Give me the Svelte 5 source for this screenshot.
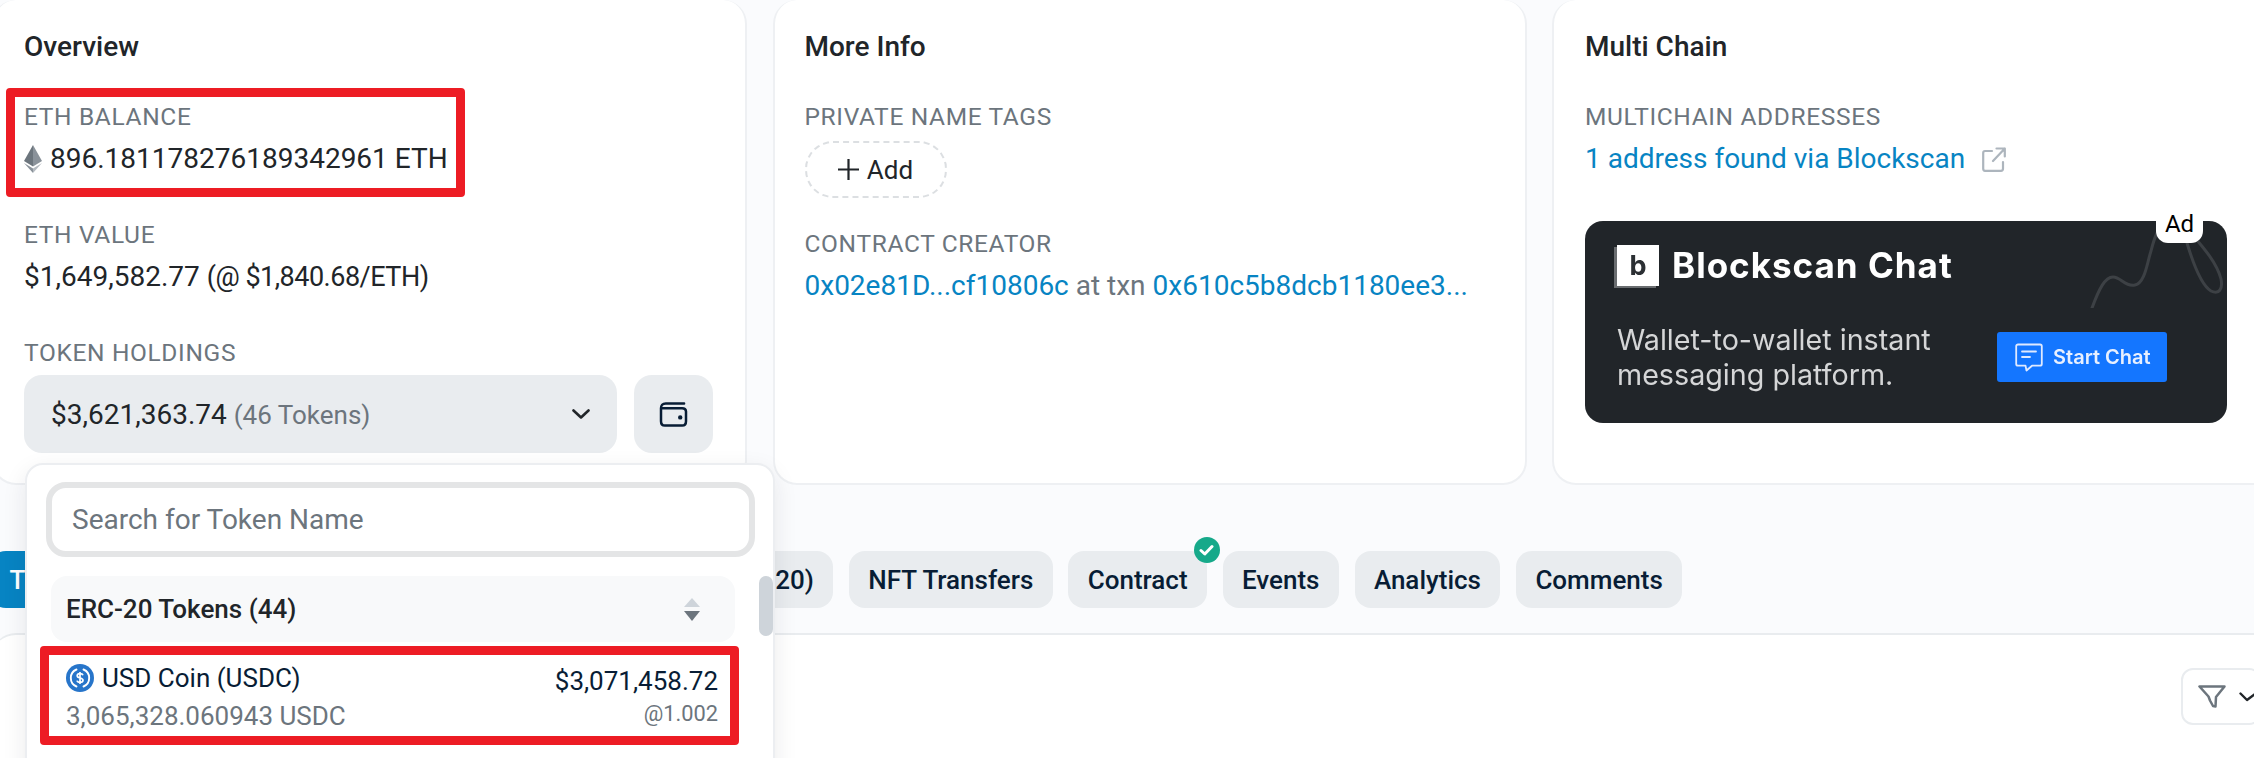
<script>
  const tabs = ['Transactions', 'Internal Transactions', 'Token Transfers (ERC-20)', 'NFT Transfers', 'Contract', 'Events', 'Analytics', 'Comments'];
</script>

<div class="page">
  <div class="cards">
    <section class="card">
      <h2>Overview</h2>
      <div class="mark balance">
        <div class="label">ETH BALANCE</div>
        <div class="value eth">
          <svg width="18" height="28" viewBox="0 0 18 28">
            <path d="M9 0 L0 16 L9 21.5 Z" fill="#6c757d" />
            <path d="M9 0 L18 16 L9 21.5 Z" fill="#8a929a" />
            <path d="M0 18 L9 23.5 L9 28 Z" fill="#8a929a" />
            <path d="M18 18 L9 23.5 L9 28 Z" fill="#b4bac0" />
          </svg>
          <span>896.181178276189342961 ETH</span>
        </div>
      </div>
      <div class="label value-label">ETH VALUE</div>
      <div class="value usd">$1,649,582.77 <span class="rate">(@ $1,840.68/ETH)</span></div>
      <div class="label holdings-label">TOKEN HOLDINGS</div>
      <div class="holdings">
        <button class="select">
          <span>$3,621,363.74 <small>(46 Tokens)</small></span>
          <svg width="18" height="10" viewBox="0 0 18 10" fill="none" stroke="#212529" stroke-width="2.6" stroke-linecap="round" stroke-linejoin="round">
            <path d="M1.5 1.5 L9 8.5 L16.5 1.5" />
          </svg>
        </button>
        <button class="wallet" aria-label="Wallet">
          <svg width="29" height="25" viewBox="0 0 30 26" fill="none" stroke="#081d35" stroke-width="2.6" stroke-linecap="round" stroke-linejoin="round">
            <path d="M26 1.5 H7 C3.5 1.5 2 3.5 2 6.5 V20 C2 23 3.5 24.5 6 24.5 H24 C26.5 24.5 28 23 28 20 V10 C28 7.5 26.5 6.5 24 6.5 H2.5" />
            <circle cx="22" cy="16" r="1" fill="#081d35" />
          </svg>
        </button>

        <div class="menu">
          <input class="search" placeholder="Search for Token Name" />
          <div class="group">
            <span>ERC-20 Tokens (44)</span>
            <svg width="16" height="23" viewBox="0 0 16 23">
              <path d="M8 0 L16 9 H0 Z" fill="#ced4da" />
              <path d="M0 13 H16 L8 23 Z" fill="#6c757d" />
            </svg>
          </div>
          <div class="mark token">
            <div class="token-left">
              <div class="token-name">
                <svg width="28" height="28" viewBox="0 0 28 28" fill="none">
                  <circle cx="14" cy="14" r="14" fill="#2775ca" />
                  <path d="M10.5 5.5 A9.2 9.2 0 0 0 10.5 22.5 M17.5 5.5 A9.2 9.2 0 0 1 17.5 22.5" stroke="#fff" stroke-width="1.9" stroke-linecap="round" />
                  <path d="M17 11.3 C16.6 10 15.5 9.6 14 9.6 C12.3 9.6 11.2 10.4 11.2 11.7 C11.2 14.8 17 13.2 17 16.3 C17 17.6 15.8 18.4 14 18.4 C12.4 18.4 11.3 17.8 11 16.6 M14 8 V20" stroke="#fff" stroke-width="1.7" />
                </svg>
                <span>USD Coin (USDC)</span>
              </div>
              <div class="token-qty">3,065,328.060943 USDC</div>
            </div>
            <div class="token-right">
              <div class="token-usd">$3,071,458.72</div>
              <div class="token-rate">@1.002</div>
            </div>
          </div>
          <div class="thumb"></div>
        </div>
      </div>
    </section>

    <section class="card">
      <h2>More Info</h2>
      <div class="label tags-label">PRIVATE NAME TAGS</div>
      <button class="add">
        <svg width="21" height="21" viewBox="0 0 21 21" stroke="#212529" stroke-width="2.2">
          <path d="M10.5 0 V21 M0 10.5 H21" />
        </svg>
        Add
      </button>
      <div class="label creator-label">CONTRACT CREATOR</div>
      <div class="value creator"><a href="#a">0x02e81D...cf10806c</a> <span class="muted">at txn</span> <a href="#b">0x610c5b8dcb1180ee3...</a></div>
    </section>

    <section class="card">
      <h2>Multi Chain</h2>
      <div class="label tags-label">MULTICHAIN ADDRESSES</div>
      <div class="value chain">
        <a href="#c">1 address found via Blockscan</a>
        <svg width="24" height="25" viewBox="0 0 24 25" fill="none" stroke="#adb5bd" stroke-width="2.2" stroke-linecap="round" stroke-linejoin="round">
          <path d="M10 4 H3 C1.8 4 1.2 4.7 1.2 6 V21.5 C1.2 23 1.8 23.8 3 23.8 H19 C20.3 23.8 21 23 21 21.5 V15 M11 14 L22.8 1.5 M14.5 1.5 H22.8 V9.5" />
        </svg>
      </div>
      <div class="ad">
        <svg class="squiggle" width="142" height="85" viewBox="0 0 142 85" fill="none" stroke="#3d4145" stroke-width="3" stroke-linecap="round">
          <path d="M7 85 C14 66 20 54 28 54 C36 54 40 64 50 62 C60 60 62 40 66 28 C68 20 70 14 72 10" />
          <path d="M102 20 C108 40 116 62 126 68 C134 72 138 66 136 56 C132 40 118 24 106 10" />
        </svg>
        <div class="ad-brand">
          <div class="ad-logo">b</div>
          <div class="ad-name">Blockscan Chat</div>
        </div>
        <div class="ad-foot">
          <p>Wallet-to-wallet instant<br />messaging platform.</p>
          <div class="ad-btn">
            <svg width="28" height="29" viewBox="0 0 28 29" fill="none" stroke="#dfe9ff" stroke-width="1.8" stroke-linejoin="round" stroke-linecap="round">
              <path d="M3 1.5 H25 C26 1.5 26.8 2.2 26.8 3.2 V21 C26.8 22 26 22.7 25 22.7 H17 L11.5 27.5 L10.5 22.7 H3 C2 22.7 1.2 22 1.2 21 V3.2 C1.2 2.2 2 1.5 3 1.5 Z" />
              <path d="M7 8.5 H21 M7 14 H15" />
            </svg>
            <span>Start Chat</span>
          </div>
        </div>
        <div class="ad-tag">Ad</div>
      </div>
    </section>
  </div>

  <nav class="tabs">
    {#each tabs as tab, i}
      <button class="tab" class:active={i === 0}>
        {tab}
        {#if tab === 'Contract'}
          <span class="verified">
            <svg width="15" height="12" viewBox="0 0 15 12" fill="none" stroke="#fff" stroke-width="3" stroke-linecap="round" stroke-linejoin="round">
              <path d="M2 6.5 L5.8 10 L13 2.5" />
            </svg>
          </span>
        {/if}
      </button>
    {/each}
  </nav>

  <section class="table-card">
    <button class="filter" aria-label="Filter">
      <svg width="28" height="23" viewBox="0 0 28 23" fill="none" stroke="#6c757d" stroke-width="2.5" stroke-linejoin="round" stroke-linecap="round">
        <path d="M1.5 1.5 H26.5 L18 12 L17.5 21.5 L15 21 L12 15.5 L10.5 11.5 Z" />
      </svg>
      <svg width="18" height="10" viewBox="0 0 18 10" fill="none" stroke="#212529" stroke-width="2.4" stroke-linecap="round" stroke-linejoin="round">
        <path d="M1.5 1.5 L8 8 L16.5 1.5" />
      </svg>
    </button>
  </section>
</div>

<style>
  :global(body) {
    margin: 0;
    background: #fafbfd;
  }

  .page {
    position: relative;
    width: 2254px;
    height: 758px;
    overflow: hidden;
    font-family: Roboto, "Liberation Sans", sans-serif;
    color: #212529;
    background: #fafbfd;
  }

  .cards {
    position: relative;
    z-index: 2;
    display: grid;
    grid-template-columns: 755px 754px 754px;
    gap: 25.5px;
    margin-left: -8px;
  }

  .card {
    box-sizing: border-box;
    height: 485px;
    padding: 29px 30px 0;
    background: #fff;
    border: 2px solid #eef0f3;
    border-top: 0;
    border-radius: 24px;
  }

  .card:last-child {
    padding-left: 31px;
  }

  h2 {
    margin: 0 0 37px;
    font-size: 28px;
    line-height: 36px;
    font-weight: 500;
  }

  .label {
    font-size: 24.5px;
    line-height: 30px;
    letter-spacing: 0.65px;
    color: #6c757d;
  }

  .value {
    font-size: 28px;
    line-height: 40px;
  }

  .rate {
    font-size: 27px;
    letter-spacing: -0.5px;
  }

  .mark {
    box-sizing: border-box;
    border: 9px solid #ed1c24;
    border-radius: 4px;
    background: #fff;
  }

  .balance {
    width: 459px;
    height: 109px;
    margin: -14px 0 23px -18px;
    padding: 5px 0 0 9px;
  }

  .eth {
    display: flex;
    align-items: center;
    gap: 8px;
    margin-top: 7px;
    white-space: nowrap;
  }

  .usd {
    margin-top: 7px;
  }

  .holdings-label {
    margin-top: 41px;
  }

  .holdings {
    position: relative;
    display: flex;
    gap: 17px;
    margin-top: 7px;
  }

  button {
    font-family: inherit;
    color: inherit;
  }

  .select,
  .wallet {
    display: flex;
    align-items: center;
    height: 78px;
    border: 0;
    border-radius: 18px;
    background: #e9ecef;
  }

  .select {
    justify-content: space-between;
    width: 593px;
    padding: 0 27px;
    font-size: 28px;
  }

  .select small {
    font-size: 26px;
    color: #6c757d;
  }

  .wallet {
    justify-content: center;
    width: 79px;
    padding: 0;
  }

  .menu {
    position: absolute;
    left: 1px;
    top: 88px;
    box-sizing: border-box;
    width: 750px;
    height: 320px;
    padding-top: 17px;
    background: #fff;
    border: 2px solid #eceef1;
    border-radius: 18px;
    box-shadow: 0 8px 24px rgba(33, 37, 41, 0.09);
  }

  .search {
    display: block;
    box-sizing: border-box;
    width: 709px;
    height: 75px;
    margin-left: 19px;
    padding: 0 20px;
    border: 6px solid #e4e5e6;
    border-radius: 20px;
    outline: 0;
    font-family: inherit;
    font-size: 28px;
    background: #fff;
  }

  .search::placeholder {
    color: #6c757d;
    opacity: 1;
  }

  .group {
    display: flex;
    align-items: center;
    justify-content: space-between;
    box-sizing: border-box;
    width: 684px;
    height: 66px;
    margin: 19px 0 4px 24px;
    padding: 0 35px 0 15px;
    border-radius: 16px;
    background: #f8f9fa;
    font-size: 26px;
    font-weight: 500;
  }

  .token {
    display: flex;
    justify-content: space-between;
    width: 699px;
    height: 99px;
    margin-left: 13px;
    padding: 5px 12px 0 17px;
  }

  .token-name {
    display: flex;
    align-items: center;
    gap: 8px;
    height: 36px;
    font-size: 26px;
    color: #081d35;
  }

  .token-qty {
    margin-top: 2px;
    font-size: 26px;
    line-height: 36px;
    color: #6c757d;
  }

  .token-right {
    padding-top: 3px;
    text-align: right;
  }

  .token-usd {
    font-size: 26px;
    line-height: 36px;
    color: #081d35;
  }

  .token-rate {
    font-size: 21.8px;
    line-height: 30px;
    color: #6c757d;
  }

  .thumb {
    position: absolute;
    left: 732px;
    top: 111px;
    width: 14px;
    height: 60px;
    border-radius: 7px;
    background: #ced4da;
  }

  .add {
    display: flex;
    align-items: center;
    justify-content: center;
    gap: 8px;
    box-sizing: border-box;
    width: 142px;
    height: 57px;
    margin-top: 9px;
    border: 2px dashed #dcdfe2;
    border-radius: 28px;
    background: #fff;
    font-size: 26px;
  }

  .creator-label {
    margin-top: 31px;
  }

  .creator {
    margin-top: 7px;
    white-space: nowrap;
  }

  a {
    color: #0784c3;
    text-decoration: none;
  }

  .muted {
    color: #6c757d;
  }

  .chain {
    display: flex;
    align-items: center;
    gap: 17px;
    margin-top: 7px;
  }

  .ad {
    position: relative;
    box-sizing: border-box;
    width: 642px;
    height: 202px;
    margin-top: 42px;
    padding: 24px 0 0 32px;
    border-radius: 18px;
    background: #212529;
    font-family: Inter, Roboto, sans-serif;
  }

  .squiggle {
    position: absolute;
    right: 0;
    top: 2px;
  }

  .ad-brand {
    position: relative;
    display: flex;
    align-items: center;
    gap: 13px;
    filter: blur(0.4px);
  }

  .ad-logo {
    display: flex;
    align-items: center;
    justify-content: center;
    width: 42px;
    height: 41px;
    background: #fff;
    box-shadow: -3px 2px 0 #6a6d70;
    color: #2b2f33;
    font-size: 27px;
    font-weight: 700;
  }

  .ad-name {
    color: #fff;
    font-size: 35px;
    line-height: 41px;
    font-weight: 700;
    letter-spacing: 1px;
  }

  .ad-foot {
    position: relative;
    display: flex;
    justify-content: space-between;
    align-items: center;
    width: 550px;
    margin-top: 36px;
    filter: blur(0.4px);
  }

  .ad-foot p {
    margin: 0;
    color: #d5d6d7;
    font-size: 28.7px;
    line-height: 35px;
  }

  .ad-btn {
    display: flex;
    align-items: center;
    gap: 10px;
    box-sizing: border-box;
    width: 170px;
    height: 50px;
    padding-left: 18px;
    border-radius: 3px;
    background: #1476ff;
    color: #e8f0ff;
    font-size: 20px;
    font-weight: 600;
  }

  .ad-tag {
    position: absolute;
    right: 24px;
    top: -14px;
    width: 47px;
    height: 36px;
    border-radius: 6px 6px 12px 12px;
    background: #fff;
    color: #000;
    font-family: Roboto, sans-serif;
    font-size: 24px;
    line-height: 34px;
    text-align: center;
  }

  .tabs {
    display: flex;
    gap: 15.8px;
    margin: 66px 0 0 -10px;
    white-space: nowrap;
  }

  .tab {
    position: relative;
    height: 57px;
    padding: 0 19.3px;
    border: 0;
    border-radius: 16px;
    background: #e9ecef;
    color: #081d35;
    font-size: 26px;
    font-weight: 500;
  }

  .tab.active {
    padding: 0 20px 0 19.5px;
    background: #0784c3;
    color: #fff;
  }

  .verified {
    position: absolute;
    right: -13px;
    top: -14px;
    display: flex;
    align-items: center;
    justify-content: center;
    width: 26px;
    height: 26px;
    border-radius: 50%;
    background: #16a98a;
  }

  .table-card {
    display: flex;
    justify-content: flex-end;
    box-sizing: border-box;
    width: 2313px;
    height: 200px;
    margin: 25px 0 0 -8px;
    padding: 33px 44px 0 0;
    background: #fff;
    border-top: 2px solid #e9ecef;
    border-radius: 24px 24px 0 0;
  }

  .filter {
    display: flex;
    align-items: center;
    gap: 13px;
    box-sizing: border-box;
    width: 80px;
    height: 57px;
    padding: 0 0 0 15px;
    border: 2px solid #e9ecef;
    border-radius: 12px;
    background: #fff;
  }
</style>
